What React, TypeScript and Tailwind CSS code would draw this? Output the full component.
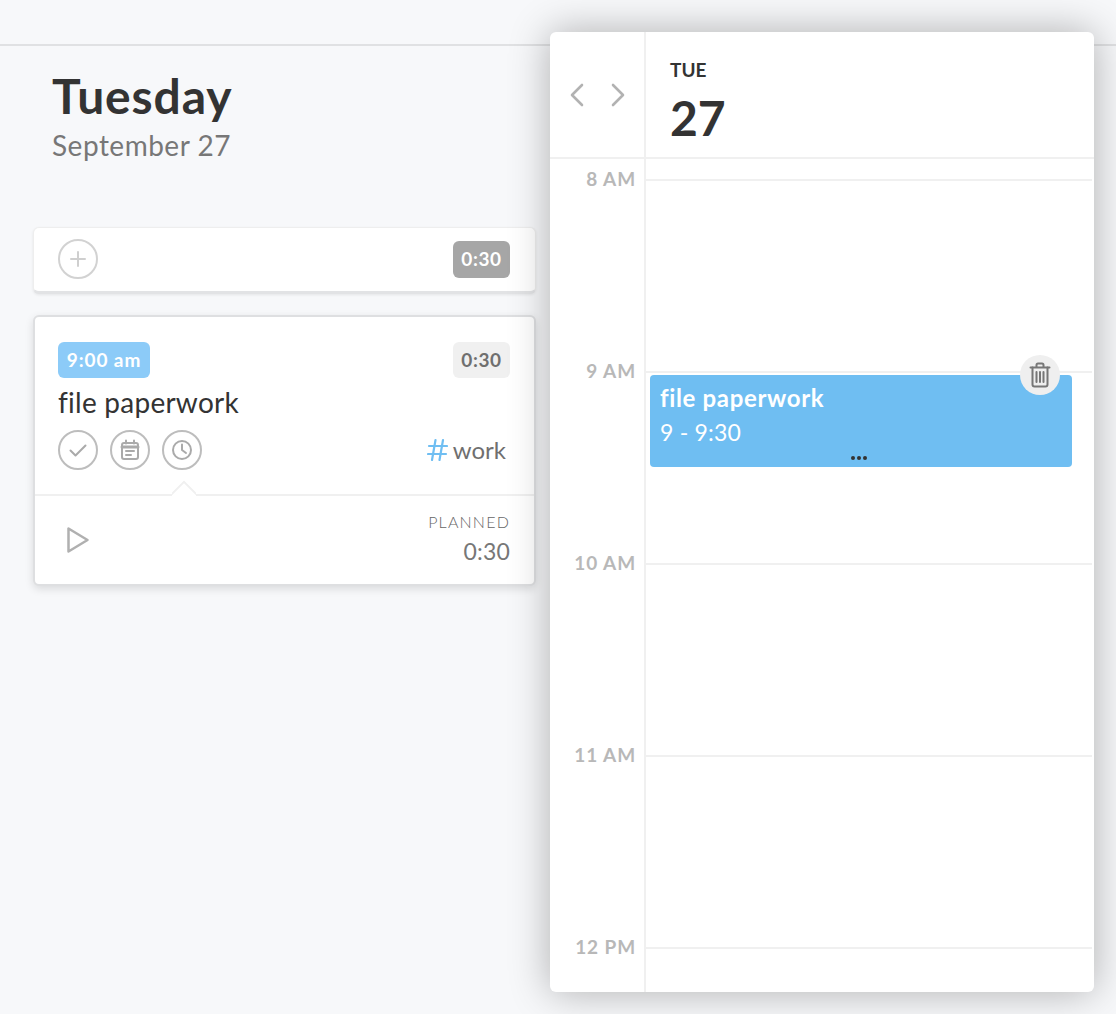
import { ChevronLeft, ChevronRight } from "lucide-react";

const hours = ["8 AM", "9 AM", "10 AM", "11 AM", "12 PM"];

const IconCircle = ({ children }: { children: React.ReactNode }) => (
  <div className="w-10 h-10 rounded-full border-2 border-[#bdbdbd] flex items-center justify-center text-[#aaaaaa]">
    {children}
  </div>
);

const TaskCards = () => (
  <div className="ml-[33px] w-[503px] flex flex-col gap-[21px]">
    <div className="h-[67px] bg-white rounded-md border border-[#eeeeee] border-b-[3px] border-b-[#e2e3e5] shadow-[0_1px_3px_rgba(0,0,0,0.08)] flex items-center justify-between pl-6 pr-[25px] pb-[1px]">
      <div className="w-10 h-10 rounded-full border-2 border-[#d2d2d2] flex items-center justify-center text-[#cfcfcf]">
        <svg width="18" height="18" viewBox="0 0 18 18" fill="none" stroke="currentColor" strokeWidth="2" strokeLinecap="round">
          <path d="M9 2v14M2 9h14" />
        </svg>
      </div>
      <div className="w-[57px] h-[37px] rounded-md bg-[#a6a6a6] text-white text-[19px] tracking-[0.6px] font-bold flex items-center justify-center">0:30</div>
    </div>

    <div className="h-[271px] bg-white rounded-md border-2 border-[#dedfe1] shadow-[0_3px_8px_rgba(0,0,0,0.12)] flex flex-col">
      <div className="h-[179px] relative pl-[23px] pr-6 pt-[25px] border-b-2 border-[#f0f0f0]">
        <div className="flex justify-between">
          <div className="w-[92px] h-9 rounded-md bg-[#8ccbf8] text-white text-[19px] tracking-[0.9px] font-bold flex items-center justify-center">9:00 am</div>
          <div className="w-[57px] h-9 rounded-md bg-[#f0f0f0] text-[#6f6f6f] text-[19px] tracking-[0.6px] font-bold flex items-center justify-center">0:30</div>
        </div>
        <div className="mt-[1px] h-[51px] text-[28px] leading-[46px] tracking-[0.25px] [font-variant-ligatures:none] text-[#333333]">file paperwork</div>
        <div className="flex items-center justify-between">
          <div className="flex gap-3">
            <IconCircle>
              <svg width="20" height="20" viewBox="0 0 20 20" fill="none" stroke="currentColor" strokeWidth="2" strokeLinecap="round" strokeLinejoin="round">
                <path d="M2.5 10.5l5 5 10-10" />
              </svg>
            </IconCircle>
            <IconCircle>
              <svg width="20" height="22" viewBox="0 0 20 22" fill="none" stroke="currentColor" strokeWidth="2" strokeLinecap="round" strokeLinejoin="round">
                <rect x="2" y="4" width="16" height="16" rx="2" />
                <path d="M2 8h16" strokeWidth="3" />
                <path d="M6 1.5v3M14 1.5v3M6 12h8M6 16h5" />
              </svg>
            </IconCircle>
            <IconCircle>
              <svg width="22" height="22" viewBox="0 0 22 22" fill="none" stroke="currentColor" strokeWidth="2" strokeLinecap="round" strokeLinejoin="round">
                <circle cx="11" cy="11" r="9" />
                <path d="M11 5.5V11l4 3" />
              </svg>
            </IconCircle>
          </div>
          <div className="flex items-center gap-[5px] pr-[4px] text-[24px] text-[#6f6f6f]">
            <svg width="21" height="24" viewBox="0 0 21 24" fill="none" stroke="#6fbef2" strokeWidth="2.2" strokeLinecap="round">
              <path d="M8.500 2L5 22M16 2L12.500 22M2 8h18M1 16h18" />
            </svg>
            <span>work</span>
          </div>
        </div>
        {/* notch pointing at the clock button */}
        <div className="absolute left-[137px] bottom-[-2px] w-[24px] h-[16px] overflow-hidden">
          <div className="absolute left-[1px] top-[5px] w-[22px] h-[22px] bg-white border-2 border-[#f0f0f0] rotate-45" />
        </div>
      </div>
      <div className="flex-1 flex justify-between pl-[23px] pr-6 pt-[15px]">
        <div className="pl-[8px] pt-[15px] text-[#b0b0b0]">
          <svg width="24" height="28" viewBox="0 0 24 28" fill="none" stroke="currentColor" strokeWidth="2.5" strokeLinejoin="round">
            <path d="M2.5 2.5v23l19-11.500z" />
          </svg>
        </div>
        <div className="flex flex-col items-end text-[#777777]">
          <div className="text-[16px] leading-[22px] tracking-[1.2px] font-light text-[#666666]">PLANNED</div>
          <div className="text-[23px] leading-[36px] tracking-[0.2px]">0:30</div>
        </div>
      </div>
    </div>
  </div>
);

const CalendarPanel = () => (
  <div className="absolute left-[550px] top-8 w-[544px] h-[960px] bg-white rounded-md shadow-[0_0_40px_rgba(0,0,0,0.3)] flex flex-col overflow-hidden">
    <div className="h-[127px] shrink-0 flex border-b-2 border-[#f0f0f0]">
      <div className="w-[96px] shrink-0 border-r-2 border-[#f0f0f0] flex items-center justify-center gap-[1px] text-[#b2b2b2]">
        <ChevronLeft size={40} strokeWidth={2.6} absoluteStrokeWidth />
        <ChevronRight size={40} strokeWidth={2.6} absoluteStrokeWidth />
      </div>
      <div className="pl-6 pt-[25px] text-[#333333]">
        <div className="text-[19px] leading-[26px] font-bold">TUE</div>
        <div className="text-[48px] leading-[56px] font-bold mt-[7px]">27</div>
      </div>
    </div>
    <div className="flex-1 flex relative pt-[20px]">
      <div className="absolute left-[94px] top-0 bottom-0 w-[2px] bg-[#f0f0f0]" />
      <div className="flex-1 pr-[2px]">
        {hours.map((h) => (
          <div key={h} className="h-[192px] flex">
            <div className="w-[86px] shrink-0 -mt-[13px] text-right text-[19px] leading-[26px] tracking-[0.9px] font-bold text-[#b8b8b8]">{h}</div>
            <div className="ml-[10px] flex-1 h-[2px] bg-[#f0f0f0]" />
          </div>
        ))}
      </div>
      {/* event sits over the hour grid */}
      <div className="absolute left-[100px] top-[216px] w-[422px] h-[92px] rounded bg-[#6fbef2] text-white pl-[10px] pt-[7px]">
        <div className="text-[24px] leading-[32px] font-bold tracking-[0.65px] [font-variant-ligatures:none]">file paperwork</div>
        <div className="text-[23px] leading-[36px] tracking-[0.2px]">9 - 9:30</div>
        <div className="absolute left-[201px] bottom-[7px] flex gap-[2px]">
          <span className="w-[4px] h-[4px] rounded-full bg-[#333333]" />
          <span className="w-[4px] h-[4px] rounded-full bg-[#333333]" />
          <span className="w-[4px] h-[4px] rounded-full bg-[#333333]" />
        </div>
      </div>
      <div className="absolute left-[470px] top-[196px] w-10 h-10 rounded-full bg-[#efefef] flex items-center justify-center text-[#777777]">
        <svg width="22" height="26" viewBox="0 0 22 26" fill="none" stroke="currentColor" strokeWidth="2" strokeLinecap="round" strokeLinejoin="round">
          <path d="M1.500 5.500h19M7.500 5.500V3a1.500 1.500 0 0 1 1.500-1.500h4A1.500 1.500 0 0 1 14.500 3v2.500" />
          <path d="M3.500 5.500v17a2 2 0 0 0 2 2h11a2 2 0 0 0 2-2v-17" />
          <path d="M7.500 10v10M11 10v10M14.500 10v10" />
        </svg>
      </div>
    </div>
  </div>
);

const App = () => {
  return (
    <div className="relative w-[1116px] h-[1014px] overflow-hidden bg-[#f7f8fa] font-['Lato',sans-serif]">
      <div className="h-[46px] border-b-2 border-[#e0e1e3]" />
      <div className="pl-[52px] pt-[20px] h-[181px]">
        <div className="text-[48px] leading-[60px] font-bold tracking-[0.85px] text-[#333333]">Tuesday</div>
        <div className="text-[28px] leading-[38px] tracking-[0.5px] text-[#777777]">September 27</div>
      </div>
      <TaskCards />
      <CalendarPanel />
    </div>
  );
};

export default App;
